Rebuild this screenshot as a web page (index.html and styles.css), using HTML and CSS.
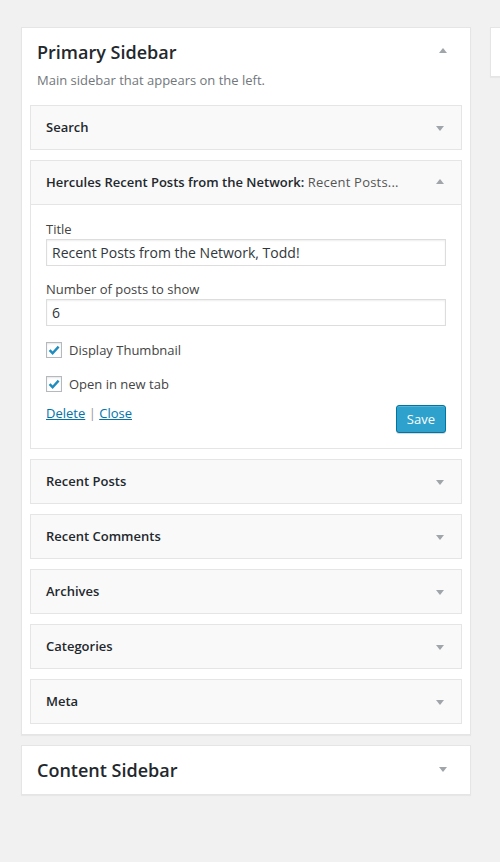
FILE: index.html
```html
<!DOCTYPE html>
<html>
<head>
<meta charset="utf-8">
<link rel="stylesheet" href="styles.css">
</head>
<body>
<div class="page">
  <div class="column">
    <div class="sidebar">
      <div class="sidebar-name">
        <h2>Primary Sidebar</h2>
        <span class="arrow up big"></span>
      </div>
      <div class="sidebar-description">Main sidebar that appears on the left.</div>
      <div class="widgets">
        <div class="widget">
          <div class="widget-top"><h3>Search</h3><span class="arrow down"></span></div>
        </div>
        <div class="widget open">
          <div class="widget-top"><h3>Hercules Recent Posts from the Network:<span class="in-title"> Recent Posts...</span></h3><span class="arrow up"></span></div>
          <div class="widget-inside">
            <p class="field">
              <label class="field-label">Title</label>
              <input class="text-input" type="text" value="Recent Posts from the Network, Todd!">
            </p>
            <p class="field second">
              <label class="field-label">Number of posts to show</label>
              <input class="text-input" type="text" value="6">
            </p>
            <div class="check-row first">
              <span class="checkbox"><svg width="14" height="14" viewBox="0 0 14 14"><path d="M2.6 7.2 L5.6 10.2 L11.6 3.6" fill="none" stroke="#1e8cbe" stroke-width="2.4" stroke-linejoin="miter"/></svg></span>
              <span class="check-label">Display Thumbnail</span>
            </div>
            <div class="check-row">
              <span class="checkbox"><svg width="14" height="14" viewBox="0 0 14 14"><path d="M2.6 7.2 L5.6 10.2 L11.6 3.6" fill="none" stroke="#1e8cbe" stroke-width="2.4" stroke-linejoin="miter"/></svg></span>
              <span class="check-label">Open in new tab</span>
            </div>
            <div class="actions">
              <div class="links"><a href="#">Delete</a> <span class="sep">|</span> <a href="#">Close</a></div>
              <button class="save">Save</button>
            </div>
          </div>
        </div>
        <div class="widget"><div class="widget-top"><h3>Recent Posts</h3><span class="arrow down"></span></div></div>
        <div class="widget"><div class="widget-top"><h3>Recent Comments</h3><span class="arrow down"></span></div></div>
        <div class="widget"><div class="widget-top"><h3>Archives</h3><span class="arrow down"></span></div></div>
        <div class="widget"><div class="widget-top"><h3>Categories</h3><span class="arrow down"></span></div></div>
        <div class="widget"><div class="widget-top"><h3>Meta</h3><span class="arrow down"></span></div></div>
      </div>
    </div>
    <div class="sidebar closed">
      <div class="sidebar-name">
        <h2>Content Sidebar</h2>
        <span class="arrow down big"></span>
      </div>
    </div>
  </div>
  <div class="column side">
    <div class="stub"></div>
  </div>
</div>
</body>
</html>
```

FILE: styles.css
```css
html, body {
  margin: 0;
  padding: 0;
}
body {
  background: #f1f1f1;
  font-family: "Open Sans", "Liberation Sans", sans-serif;
  font-size: 13px;
  color: #444;
  width: 500px;
  height: 862px;
  overflow: hidden;
}
.page {
  display: flex;
  gap: 19px;
  padding: 27px 0 0 21px;
}
.column {
  width: 450px;
  flex: none;
  display: flex;
  flex-direction: column;
  gap: 10px;
}
.column.side {
  width: 10px;
}
.stub {
  height: 48px;
  background: #fff;
  border: 1px solid #e5e5e5;
  border-right: none;
  box-shadow: 0 1px 1px rgba(0,0,0,.04);
}
.sidebar {
  background: #fff;
  border: 1px solid #e5e5e5;
  box-shadow: 0 1px 1px rgba(0,0,0,.04);
}
.sidebar-name {
  height: 48px;
  padding: 0 23px 0 15px;
  display: flex;
  align-items: center;
  justify-content: space-between;
}
.sidebar-name h2 {
  margin: 0;
  font-size: 18px;
  font-weight: 600;
  color: #23282d;
  line-height: 25px;
}
.sidebar-description {
  margin: -5px 15px 0;
  line-height: 19px;
  color: #72777c;
  font-size: 13px;
}
.widgets {
  padding: 15px 8px 10px;
  display: flex;
  flex-direction: column;
  gap: 10px;
}
.widget {
  border: 1px solid #e5e5e5;
  background: #f9f9f9;
}
.widget-top {
  height: 43px;
  padding: 0 17px 0 15px;
  display: flex;
  align-items: center;
  justify-content: space-between;
}
.widget-top h3 {
  margin: -2px 0 0;
  font-size: 13px;
  font-weight: 600;
  color: #23282d;
  line-height: 16px;
  white-space: nowrap;
}
.in-title {
  font-weight: 400;
  color: #555;
  letter-spacing: 0.2px;
}
.arrow {
  width: 0;
  height: 0;
  border-left: 4px solid transparent;
  border-right: 4px solid transparent;
}
.arrow.down {
  border-top: 5px solid #a0a5aa;
  margin-top: 2px;
}
.arrow.up {
  border-bottom: 5px solid #a0a5aa;
  margin-top: -2px;
}
.widget-inside {
  background: #fff;
  border-top: 1px solid #e5e5e5;
  padding: 1px 15px 15px;
}
.field {
  margin: 14px 0 0;
}
.field-label {
  display: block;
  line-height: 18px;
  color: #444;
}
.text-input {
  display: block;
  box-sizing: border-box;
  width: 100%;
  height: 27px;
  margin: 1px 0 0;
  padding: 0 5px;
  border: 1px solid #ddd;
  box-shadow: inset 0 1px 2px rgba(0,0,0,.07);
  font-family: "Open Sans", "Liberation Sans", sans-serif;
  font-size: 14px;
  color: #32373c;
  background: #fff;
  outline: none;
}
.check-row {
  display: flex;
  align-items: center;
  height: 16px;
  margin-top: 18px;
}
.check-row.first {
  margin-top: 16px;
}
.checkbox {
  box-sizing: border-box;
  width: 16px;
  height: 16px;
  border: 1px solid #b4b9be;
  background: #fff;
  box-shadow: inset 0 1px 2px rgba(0,0,0,.1);
  display: flex;
  align-items: center;
  justify-content: center;
  margin-right: 7px;
}
.checkbox svg {
  display: block;
}
.check-label {
  line-height: 18px;
  color: #444;
  margin-top: -1px;
}
.actions {
  margin-top: 12px;
  display: flex;
  justify-content: space-between;
  align-items: flex-start;
}
.links {
  line-height: 18px;
  color: #72777c;
}
.links a {
  color: #0073aa;
  text-decoration: underline;
}
.sep {
  color: #999;
}
.save {
  margin-top: 1px;
  box-sizing: border-box;
  height: 28px;
  padding: 0 10px;
  border: 1px solid #0074a2;
  border-radius: 3px;
  background: #2ea2cc;
  color: #fff;
  font-family: "Open Sans", "Liberation Sans", sans-serif;
  font-size: 13px;
  line-height: 26px;
  box-shadow: inset 0 1px 0 rgba(120,200,230,.5), 0 1px 0 rgba(0,0,0,.15);
}
.arrow.big.up {
  margin-top: -4px;
}
.arrow.big.down {
  margin-top: -2px;
}
```
